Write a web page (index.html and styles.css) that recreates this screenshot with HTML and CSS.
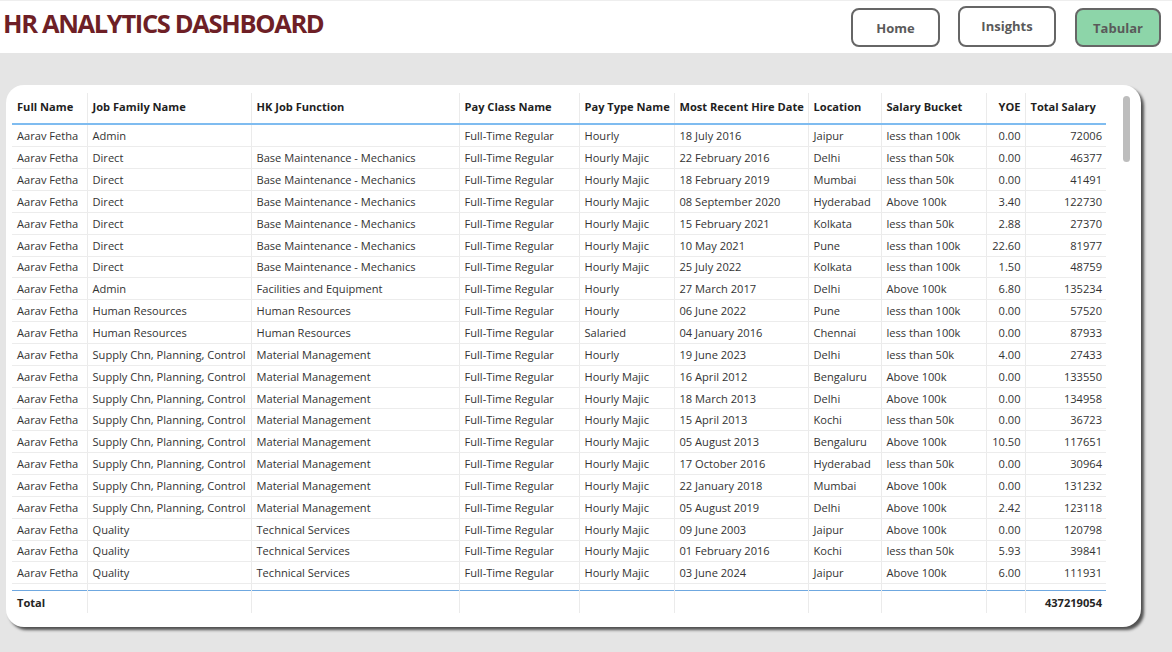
FILE: index.html
```html
<!DOCTYPE html>
<html>
<head>
<meta charset="utf-8">
<link rel="stylesheet" href="styles.css">
</head>
<body>
<header class="topbar">
  <h1 class="title">HR ANALYTICS DASHBOARD</h1>
  <nav class="nav">
    <button class="btn btn-home">Home</button>
    <button class="btn btn-insights">Insights</button>
    <button class="btn btn-active">Tabular</button>
  </nav>
</header>
<main class="stage">
  <section class="card">
    <div class="grid-wrap">
      <table class="grid">
        <colgroup>
          <col style="width:75px"><col style="width:164px"><col style="width:208px"><col style="width:120px"><col style="width:95px"><col style="width:134px"><col style="width:73px"><col style="width:105px"><col style="width:39px"><col style="width:81px">
        </colgroup>
        <thead>
          <tr><th>Full Name</th><th>Job Family Name</th><th>HK Job Function</th><th>Pay Class Name</th><th>Pay Type Name</th><th>Most Recent Hire Date</th><th>Location</th><th>Salary Bucket</th><th class="num">YOE</th><th>Total Salary</th></tr>
        </thead>
      </table>
      <div class="body-clip">
      <table class="grid">
        <colgroup>
          <col style="width:75px"><col style="width:164px"><col style="width:208px"><col style="width:120px"><col style="width:95px"><col style="width:134px"><col style="width:73px"><col style="width:105px"><col style="width:39px"><col style="width:81px">
        </colgroup>
        <tbody>
          <tr><td>Aarav Fetha</td><td>Admin</td><td></td><td>Full-Time Regular</td><td>Hourly</td><td>18 July 2016</td><td>Jaipur</td><td>less than 100k</td><td class="num">0.00</td><td class="num">72006</td></tr>
          <tr><td>Aarav Fetha</td><td>Direct</td><td>Base Maintenance - Mechanics</td><td>Full-Time Regular</td><td>Hourly Majic</td><td>22 February 2016</td><td>Delhi</td><td>less than 50k</td><td class="num">0.00</td><td class="num">46377</td></tr>
          <tr><td>Aarav Fetha</td><td>Direct</td><td>Base Maintenance - Mechanics</td><td>Full-Time Regular</td><td>Hourly Majic</td><td>18 February 2019</td><td>Mumbai</td><td>less than 50k</td><td class="num">0.00</td><td class="num">41491</td></tr>
          <tr><td>Aarav Fetha</td><td>Direct</td><td>Base Maintenance - Mechanics</td><td>Full-Time Regular</td><td>Hourly Majic</td><td>08 September 2020</td><td>Hyderabad</td><td>Above 100k</td><td class="num">3.40</td><td class="num">122730</td></tr>
          <tr><td>Aarav Fetha</td><td>Direct</td><td>Base Maintenance - Mechanics</td><td>Full-Time Regular</td><td>Hourly Majic</td><td>15 February 2021</td><td>Kolkata</td><td>less than 50k</td><td class="num">2.88</td><td class="num">27370</td></tr>
          <tr><td>Aarav Fetha</td><td>Direct</td><td>Base Maintenance - Mechanics</td><td>Full-Time Regular</td><td>Hourly Majic</td><td>10 May 2021</td><td>Pune</td><td>less than 100k</td><td class="num">22.60</td><td class="num">81977</td></tr>
          <tr><td>Aarav Fetha</td><td>Direct</td><td>Base Maintenance - Mechanics</td><td>Full-Time Regular</td><td>Hourly Majic</td><td>25 July 2022</td><td>Kolkata</td><td>less than 100k</td><td class="num">1.50</td><td class="num">48759</td></tr>
          <tr><td>Aarav Fetha</td><td>Admin</td><td>Facilities and Equipment</td><td>Full-Time Regular</td><td>Hourly</td><td>27 March 2017</td><td>Delhi</td><td>Above 100k</td><td class="num">6.80</td><td class="num">135234</td></tr>
          <tr><td>Aarav Fetha</td><td>Human Resources</td><td>Human Resources</td><td>Full-Time Regular</td><td>Hourly</td><td>06 June 2022</td><td>Pune</td><td>less than 100k</td><td class="num">0.00</td><td class="num">57520</td></tr>
          <tr><td>Aarav Fetha</td><td>Human Resources</td><td>Human Resources</td><td>Full-Time Regular</td><td>Salaried</td><td>04 January 2016</td><td>Chennai</td><td>less than 100k</td><td class="num">0.00</td><td class="num">87933</td></tr>
          <tr><td>Aarav Fetha</td><td>Supply Chn, Planning, Control</td><td>Material Management</td><td>Full-Time Regular</td><td>Hourly</td><td>19 June 2023</td><td>Delhi</td><td>less than 50k</td><td class="num">4.00</td><td class="num">27433</td></tr>
          <tr><td>Aarav Fetha</td><td>Supply Chn, Planning, Control</td><td>Material Management</td><td>Full-Time Regular</td><td>Hourly Majic</td><td>16 April 2012</td><td>Bengaluru</td><td>Above 100k</td><td class="num">0.00</td><td class="num">133550</td></tr>
          <tr><td>Aarav Fetha</td><td>Supply Chn, Planning, Control</td><td>Material Management</td><td>Full-Time Regular</td><td>Hourly Majic</td><td>18 March 2013</td><td>Delhi</td><td>Above 100k</td><td class="num">0.00</td><td class="num">134958</td></tr>
          <tr><td>Aarav Fetha</td><td>Supply Chn, Planning, Control</td><td>Material Management</td><td>Full-Time Regular</td><td>Hourly Majic</td><td>15 April 2013</td><td>Kochi</td><td>less than 50k</td><td class="num">0.00</td><td class="num">36723</td></tr>
          <tr><td>Aarav Fetha</td><td>Supply Chn, Planning, Control</td><td>Material Management</td><td>Full-Time Regular</td><td>Hourly Majic</td><td>05 August 2013</td><td>Bengaluru</td><td>Above 100k</td><td class="num">10.50</td><td class="num">117651</td></tr>
          <tr><td>Aarav Fetha</td><td>Supply Chn, Planning, Control</td><td>Material Management</td><td>Full-Time Regular</td><td>Hourly Majic</td><td>17 October 2016</td><td>Hyderabad</td><td>less than 50k</td><td class="num">0.00</td><td class="num">30964</td></tr>
          <tr><td>Aarav Fetha</td><td>Supply Chn, Planning, Control</td><td>Material Management</td><td>Full-Time Regular</td><td>Hourly Majic</td><td>22 January 2018</td><td>Mumbai</td><td>Above 100k</td><td class="num">0.00</td><td class="num">131232</td></tr>
          <tr><td>Aarav Fetha</td><td>Supply Chn, Planning, Control</td><td>Material Management</td><td>Full-Time Regular</td><td>Hourly Majic</td><td>05 August 2019</td><td>Delhi</td><td>Above 100k</td><td class="num">2.42</td><td class="num">123118</td></tr>
          <tr><td>Aarav Fetha</td><td>Quality</td><td>Technical Services</td><td>Full-Time Regular</td><td>Hourly Majic</td><td>09 June 2003</td><td>Jaipur</td><td>Above 100k</td><td class="num">0.00</td><td class="num">120798</td></tr>
          <tr><td>Aarav Fetha</td><td>Quality</td><td>Technical Services</td><td>Full-Time Regular</td><td>Hourly Majic</td><td>01 February 2016</td><td>Kochi</td><td>less than 50k</td><td class="num">5.93</td><td class="num">39841</td></tr>
          <tr><td>Aarav Fetha</td><td>Quality</td><td>Technical Services</td><td>Full-Time Regular</td><td>Hourly Majic</td><td>03 June 2024</td><td>Jaipur</td><td>Above 100k</td><td class="num">6.00</td><td class="num">111931</td></tr>
          <tr class="cut"><td></td><td></td><td></td><td></td><td></td><td></td><td></td><td></td><td></td><td></td></tr>
        </tbody>
      </table>
      </div>
      <table class="grid">
        <colgroup>
          <col style="width:75px"><col style="width:164px"><col style="width:208px"><col style="width:120px"><col style="width:95px"><col style="width:134px"><col style="width:73px"><col style="width:105px"><col style="width:39px"><col style="width:81px">
        </colgroup>
        <tfoot>
          <tr><td>Total</td><td></td><td></td><td></td><td></td><td></td><td></td><td></td><td></td><td class="num">437219054</td></tr>
        </tfoot>
      </table>
    </div>
    <div class="scrollbar"></div>
  </section>
</main>
</body>
</html>
```

FILE: styles.css
```css
* { box-sizing: border-box; }
html, body { margin: 0; padding: 0; }
body {
  width: 1172px;
  height: 652px;
  overflow: hidden;
  background: #e5e5e5;
  font-family: "Segoe UI", "Open Sans", "Noto Sans", sans-serif;
  color: #252423;
}
.topbar {
  height: 53px;
  background: #ffffff;
  border-top: 1px solid #eeeeee;
  display: flex;
  justify-content: space-between;
  align-items: flex-start;
}
.title {
  margin: 5px 0 0 3px;
  font-family: "Open Sans", sans-serif;
  font-weight: 700;
  font-size: 25.5px;
  line-height: 34px;
  letter-spacing: -1.35px;
  color: #6e1f26;
}
.nav {
  display: flex;
  align-items: flex-start;
  padding-right: 11px;
}
.btn {
  font-family: "Open Sans", sans-serif;
  font-weight: 700;
  font-size: 13px;
  color: #5a5a5a;
  background: #ffffff;
  border: 2px solid #666666;
  border-radius: 8px;
  height: 39px;
  padding: 0;
}
.btn-home { width: 89px; margin-top: 7px; }
.btn-insights { width: 98px; height: 41px; margin-top: 5px; margin-left: 18px; padding-bottom: 2px; }
.btn-active { width: 86px; margin-top: 7px; margin-left: 19px; background: #8dd5a9; }
.stage {
  padding: 32px 0 0 6px;
}
.card {
  width: 1135px;
  height: 542px;
  background: #ffffff;
  border-radius: 18px;
  box-shadow: 3px 3px 3px rgba(0, 0, 0, 0.65);
  display: flex;
  align-items: flex-start;
  padding: 8px 0 0 6px;
}
.grid-wrap {
  width: 1094px;
}
.grid {
  width: 1094px;
  table-layout: fixed;
  border-collapse: collapse;
  font-size: 11.1px;
}
.grid th, .grid td {
  white-space: nowrap;
  overflow: hidden;
  padding: 0 4px 0 5px;
  text-align: left;
  border-right: 1px solid #ebebeb;
}
.grid th:last-child, .grid td:last-child { border-right: none; }
.grid th {
  height: 31px;
  font-weight: 700;
  color: #1f1f1f;
  vertical-align: middle;
  padding-bottom: 4px;
  border-bottom: 2px solid #7fbcf0;
}
.grid th.num { text-align: right; }
.grid td {
  height: 21.85px;
  font-weight: 400;
  color: #333333;
  border-bottom: 1px solid #ececec;
  line-height: 16px;
  padding-top: 1px;
}
.grid td.num { text-align: right; }
.body-clip {
  height: 465px;
  overflow: hidden;
}
.grid tfoot td {
  border-top: 1px solid #6fa8e0;
  border-bottom: none;
  font-weight: 700;
  color: #252423;
  height: 22px;
  padding-top: 2px;
}
.scrollbar {
  width: 7px;
  height: 66px;
  margin: 3px 0 0 17px;
  background: #bdbdbd;
  border-radius: 4px;
}
```
